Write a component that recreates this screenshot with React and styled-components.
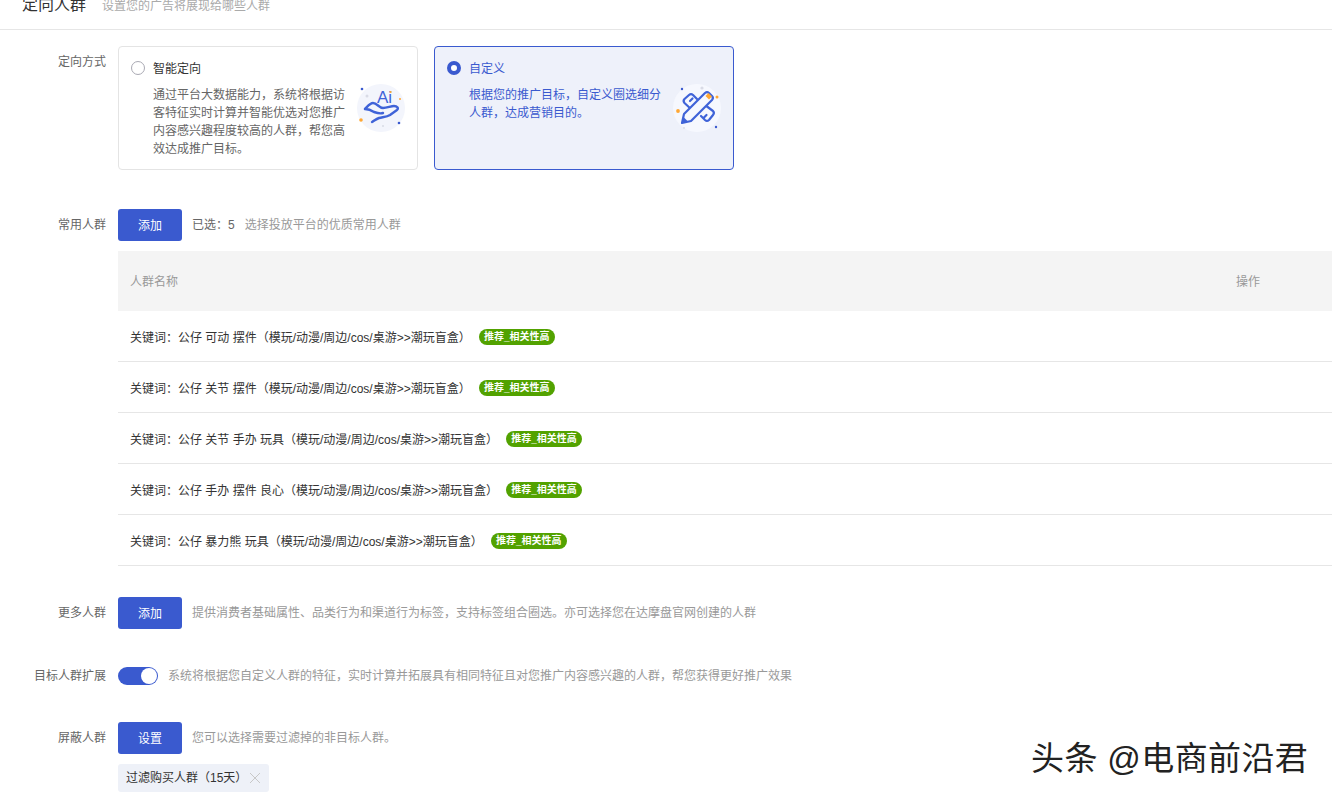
import React from "react";
import styled, { createGlobalStyle } from "styled-components";

const blue = "#3a5acf";

const GlobalStyle = createGlobalStyle`
  html, body {
    margin: 0;
    padding: 0;
    height: 800px;
    overflow: hidden;
    background: #fff;
  }
  body {
    font-family: "Liberation Sans", "Noto Sans CJK SC", sans-serif;
    font-size: 12px;
    line-height: 18px;
    color: #333;
  }
  * { box-sizing: border-box; }
`;

const Page = styled.div`
  position: relative;
  width: 1332px;
  height: 800px;
  overflow: hidden;
`;

const Header = styled.header`
  display: flex;
  align-items: baseline;
  margin-top: -16px;
  height: 46px;
  padding: 9px 0 0 22px;
  border-bottom: 1px solid #e6e6e6;
`;

const Title = styled.h2`
  margin: 0;
  font-size: 16px;
  line-height: 24px;
  font-weight: 400;
  color: #333;
`;

const Subtitle = styled.span`
  margin-left: 16px;
  color: #aaa;
`;

const Row = styled.section`
  display: flex;
  align-items: flex-start;
  margin-top: ${(p) => p.$top}px;
`;

const Label = styled.div`
  flex: none;
  width: 106px;
  margin-right: 12px;
  text-align: right;
  color: #666;
  line-height: ${(p) => p.$line || 32}px;
`;

const Content = styled.div`
  flex: 1;
  min-width: 0;
`;

const Cards = styled.div`
  display: flex;
  gap: 16px;
`;

const Card = styled.div`
  width: 300px;
  height: 124px;
  padding: 11px 0 0 12px;
  border: 1px solid ${(p) => (p.$active ? blue : "#e4e4e4")};
  border-radius: 4px;
  background: ${(p) => (p.$active ? "#eef1fa" : "#fff")};
  color: ${(p) => (p.$active ? blue : "#666")};
`;

const CardHead = styled.div`
  display: flex;
  align-items: center;
  height: 20px;
  color: ${(p) => (p.$active ? blue : "#333")};
`;

const CardName = styled.span`
  margin-top: 2px;
`;

const Radio = styled.span`
  flex: none;
  width: 14px;
  height: 14px;
  margin-right: 8px;
  border-radius: 50%;
  background: #fff;
  border: ${(p) => (p.$active ? `4px solid ${blue}` : "1px solid #a9a9b3")};
`;

const CardBody = styled.div`
  display: flex;
  padding-left: 22px;
`;

const CardText = styled.p`
  flex: none;
  width: 192px;
  margin: 8px 6px 0 0;
  line-height: 18px;
`;

const ButtonLine = styled.div`
  display: flex;
  align-items: center;
  height: 32px;
`;

const Button = styled.button`
  flex: none;
  width: 64px;
  height: 32px;
  margin-right: 10px;
  padding: 2px 0 0;
  border: none;
  border-radius: 3px;
  background: ${blue};
  color: #fff;
  font: inherit;
`;

const Selected = styled.span`
  margin-right: 10px;
  color: #666;
`;

const Hint = styled.span`
  color: #999;
`;

const Table = styled.div`
  margin-top: 10px;
`;

const TableHead = styled.div`
  display: grid;
  grid-template-columns: 1fr 96px;
  align-items: center;
  height: 60px;
  padding: 2px 0 0 12px;
  background: #f4f4f4;
  color: #999;
`;

const TableRow = styled.div`
  display: flex;
  align-items: center;
  height: 51px;
  padding: 3px 0 0 12px;
  border-bottom: 1px solid #e6e6e6;
  color: #333;
`;

const Badge = styled.span`
  display: inline-flex;
  align-items: center;
  justify-content: center;
  width: 76px;
  height: 16px;
  margin: -2px 0 0 8px;
  border-radius: 8px;
  background: #52a200;
  color: #fff;
  font-size: 10px;
  font-weight: 700;
`;

const SwitchLine = styled.div`
  display: flex;
  align-items: center;
  height: 18px;
`;

const Switch = styled.span`
  flex: none;
  display: flex;
  justify-content: flex-end;
  align-items: center;
  width: 40px;
  height: 18px;
  margin-right: 10px;
  padding-right: 1px;
  border-radius: 9px;
  background: ${blue};
`;

const Knob = styled.span`
  width: 16px;
  height: 16px;
  border-radius: 50%;
  background: #fff;
`;

const Tag = styled.div`
  display: inline-flex;
  align-items: center;
  height: 28px;
  margin-top: 10px;
  padding: 0 8px;
  border-radius: 3px;
  background: #eef1f8;
  color: #333;
`;

const CloseIcon = styled.svg`
  margin-left: 2px;
`;

const Watermark = styled.div`
  position: absolute;
  left: 1031px;
  top: 738px;
  font-size: 33px;
  line-height: 42px;
  letter-spacing: 0.4px;
  white-space: nowrap;
  color: #222;
  text-shadow: 1px 1px 0 #fff;
`;

const AiIcon = () => (
  <svg width="60" height="60" viewBox="0 0 60 60" fill="none">
    <circle cx="30" cy="30" r="24" fill="#f3f5fc" />
    <circle cx="11" cy="11" r="1.3" fill={blue} />
    <circle cx="16" cy="18" r="1.5" fill="#d9dbe6" />
    <circle cx="49" cy="21" r="1" fill="#ffa733" />
    <circle cx="10" cy="42" r="1.8" fill="#ffa733" />
    <circle cx="48" cy="45" r="1.3" fill={blue} />
    <circle cx="32" cy="48" r="1" fill="#d9dbe6" />
    <text x="26" y="25" fill="#3f63d8" fontFamily="Liberation Sans" fontSize="17">Ai</text>
    <circle cx="39.6" cy="14" r="1.1" fill="#ffa733" />
    <path
      d="M14 31c3-3 5-6 8-6 4 0 6 5 10 5 4 0 8-2 11-2 3 0 5 2 3 4l-7 5c-3 2-7 2-11 3-3 1-5 3-7 4"
      stroke="#3f63d8"
      strokeWidth="2.4"
      strokeLinecap="round"
      strokeLinejoin="round"
    />
    <path d="M14 31c3 0 6 1 9 3 3 1 6 2 9 1" stroke="#3f63d8" strokeWidth="2.4" strokeLinecap="round" />
  </svg>
);

const EditIcon = () => (
  <svg width="60" height="60" viewBox="0 0 60 60" fill="none">
    <circle cx="30" cy="30" r="24" fill="#f6f8fe" />
    <circle cx="15" cy="11" r="1.2" fill={blue} />
    <circle cx="35" cy="10" r="1.6" fill="#d9dbe6" />
    <circle cx="50" cy="19" r="1.5" fill="#ffa733" />
    <circle cx="11" cy="33" r="1.9" fill="#ffa733" />
    <circle cx="49" cy="49" r="1.2" fill={blue} />
    <circle cx="17" cy="50" r="0.9" fill="#d9dbe6" />
    <path
      d="M30 21l-4-4a3 3 0 0 0-4 0l-4.5 4a3 3 0 0 0 0 4L25 32M23 23l2.5-2.5"
      stroke="#3f63d8"
      strokeWidth="2.2"
      strokeLinecap="round"
      strokeLinejoin="round"
    />
    <path
      d="M38 27l8 6a3 3 0 0 1 0 4l-4 5a3 3 0 0 1-4 0l-4-4M39.5 37L37 39.5"
      stroke="#3f63d8"
      strokeWidth="2.2"
      strokeLinecap="round"
      strokeLinejoin="round"
    />
    <path
      d="M15 45l2-9 21-21a3 3 0 0 1 4 0l3 3a3 3 0 0 1 0 4L24 43z"
      fill="#f6f8fe"
      stroke="#3f63d8"
      strokeWidth="2.2"
      strokeLinejoin="round"
    />
    <path d="M38.5 18l3-3 3.5 3.5-3 3z" fill="#ffa733" />
    <path d="M15 45l1.5-6 4.5 4.5z" fill="#3f63d8" />
  </svg>
);

const audiences = [
  "关键词：公仔 可动 摆件（模玩/动漫/周边/cos/桌游>>潮玩盲盒）",
  "关键词：公仔 关节 摆件（模玩/动漫/周边/cos/桌游>>潮玩盲盒）",
  "关键词：公仔 关节 手办 玩具（模玩/动漫/周边/cos/桌游>>潮玩盲盒）",
  "关键词：公仔 手办 摆件 良心（模玩/动漫/周边/cos/桌游>>潮玩盲盒）",
  "关键词：公仔 暴力熊 玩具（模玩/动漫/周边/cos/桌游>>潮玩盲盒）",
];

const App = () => {
  return (
    <Page>
      <GlobalStyle />
      <Header>
        <Title>定向人群</Title>
        <Subtitle>设置您的广告将展现给哪些人群</Subtitle>
      </Header>

      <Row $top={16}>
        <Label>定向方式</Label>
        <Content>
          <Cards>
            <Card>
              <CardHead>
                <Radio />
                <CardName>智能定向</CardName>
              </CardHead>
              <CardBody>
                <CardText>
                  通过平台大数据能力，系统将根据访客特征实时计算并智能优选对您推广内容感兴趣程度较高的人群，帮您高效达成推广目标。
                </CardText>
                <AiIcon />
              </CardBody>
            </Card>
            <Card $active>
              <CardHead $active>
                <Radio $active />
                <CardName>自定义</CardName>
              </CardHead>
              <CardBody>
                <CardText>根据您的推广目标，自定义圈选细分人群，达成营销目的。</CardText>
                <EditIcon />
              </CardBody>
            </Card>
          </Cards>
        </Content>
      </Row>

      <Row $top={39}>
        <Label>常用人群</Label>
        <Content>
          <ButtonLine>
            <Button>添加</Button>
            <Selected>已选：5</Selected>
            <Hint>选择投放平台的优质常用人群</Hint>
          </ButtonLine>
          <Table>
            <TableHead>
              <span>人群名称</span>
              <span>操作</span>
            </TableHead>
            {audiences.map((name) => (
              <TableRow key={name}>
                {name}
                <Badge>推荐_相关性高</Badge>
              </TableRow>
            ))}
          </Table>
        </Content>
      </Row>

      <Row $top={31}>
        <Label>更多人群</Label>
        <Content>
          <ButtonLine>
            <Button>添加</Button>
            <Hint>提供消费者基础属性、品类行为和渠道行为标签，支持标签组合圈选。亦可选择您在达摩盘官网创建的人群</Hint>
          </ButtonLine>
        </Content>
      </Row>

      <Row $top={38}>
        <Label $line={18}>目标人群扩展</Label>
        <Content>
          <SwitchLine>
            <Switch>
              <Knob />
            </Switch>
            <Hint>系统将根据您自定义人群的特征，实时计算并拓展具有相同特征且对您推广内容感兴趣的人群，帮您获得更好推广效果</Hint>
          </SwitchLine>
        </Content>
      </Row>

      <Row $top={37}>
        <Label>屏蔽人群</Label>
        <Content>
          <ButtonLine>
            <Button>设置</Button>
            <Hint>您可以选择需要过滤掉的非目标人群。</Hint>
          </ButtonLine>
          <Tag>
            过滤购买人群（15天）
            <CloseIcon width="12" height="12" viewBox="0 0 12 12">
              <path d="M1 1l10 10M11 1L1 11" stroke="#c8c8c8" strokeWidth="1" />
            </CloseIcon>
          </Tag>
        </Content>
      </Row>

      <Watermark>头条 @电商前沿君</Watermark>
    </Page>
  );
};

export default App;
